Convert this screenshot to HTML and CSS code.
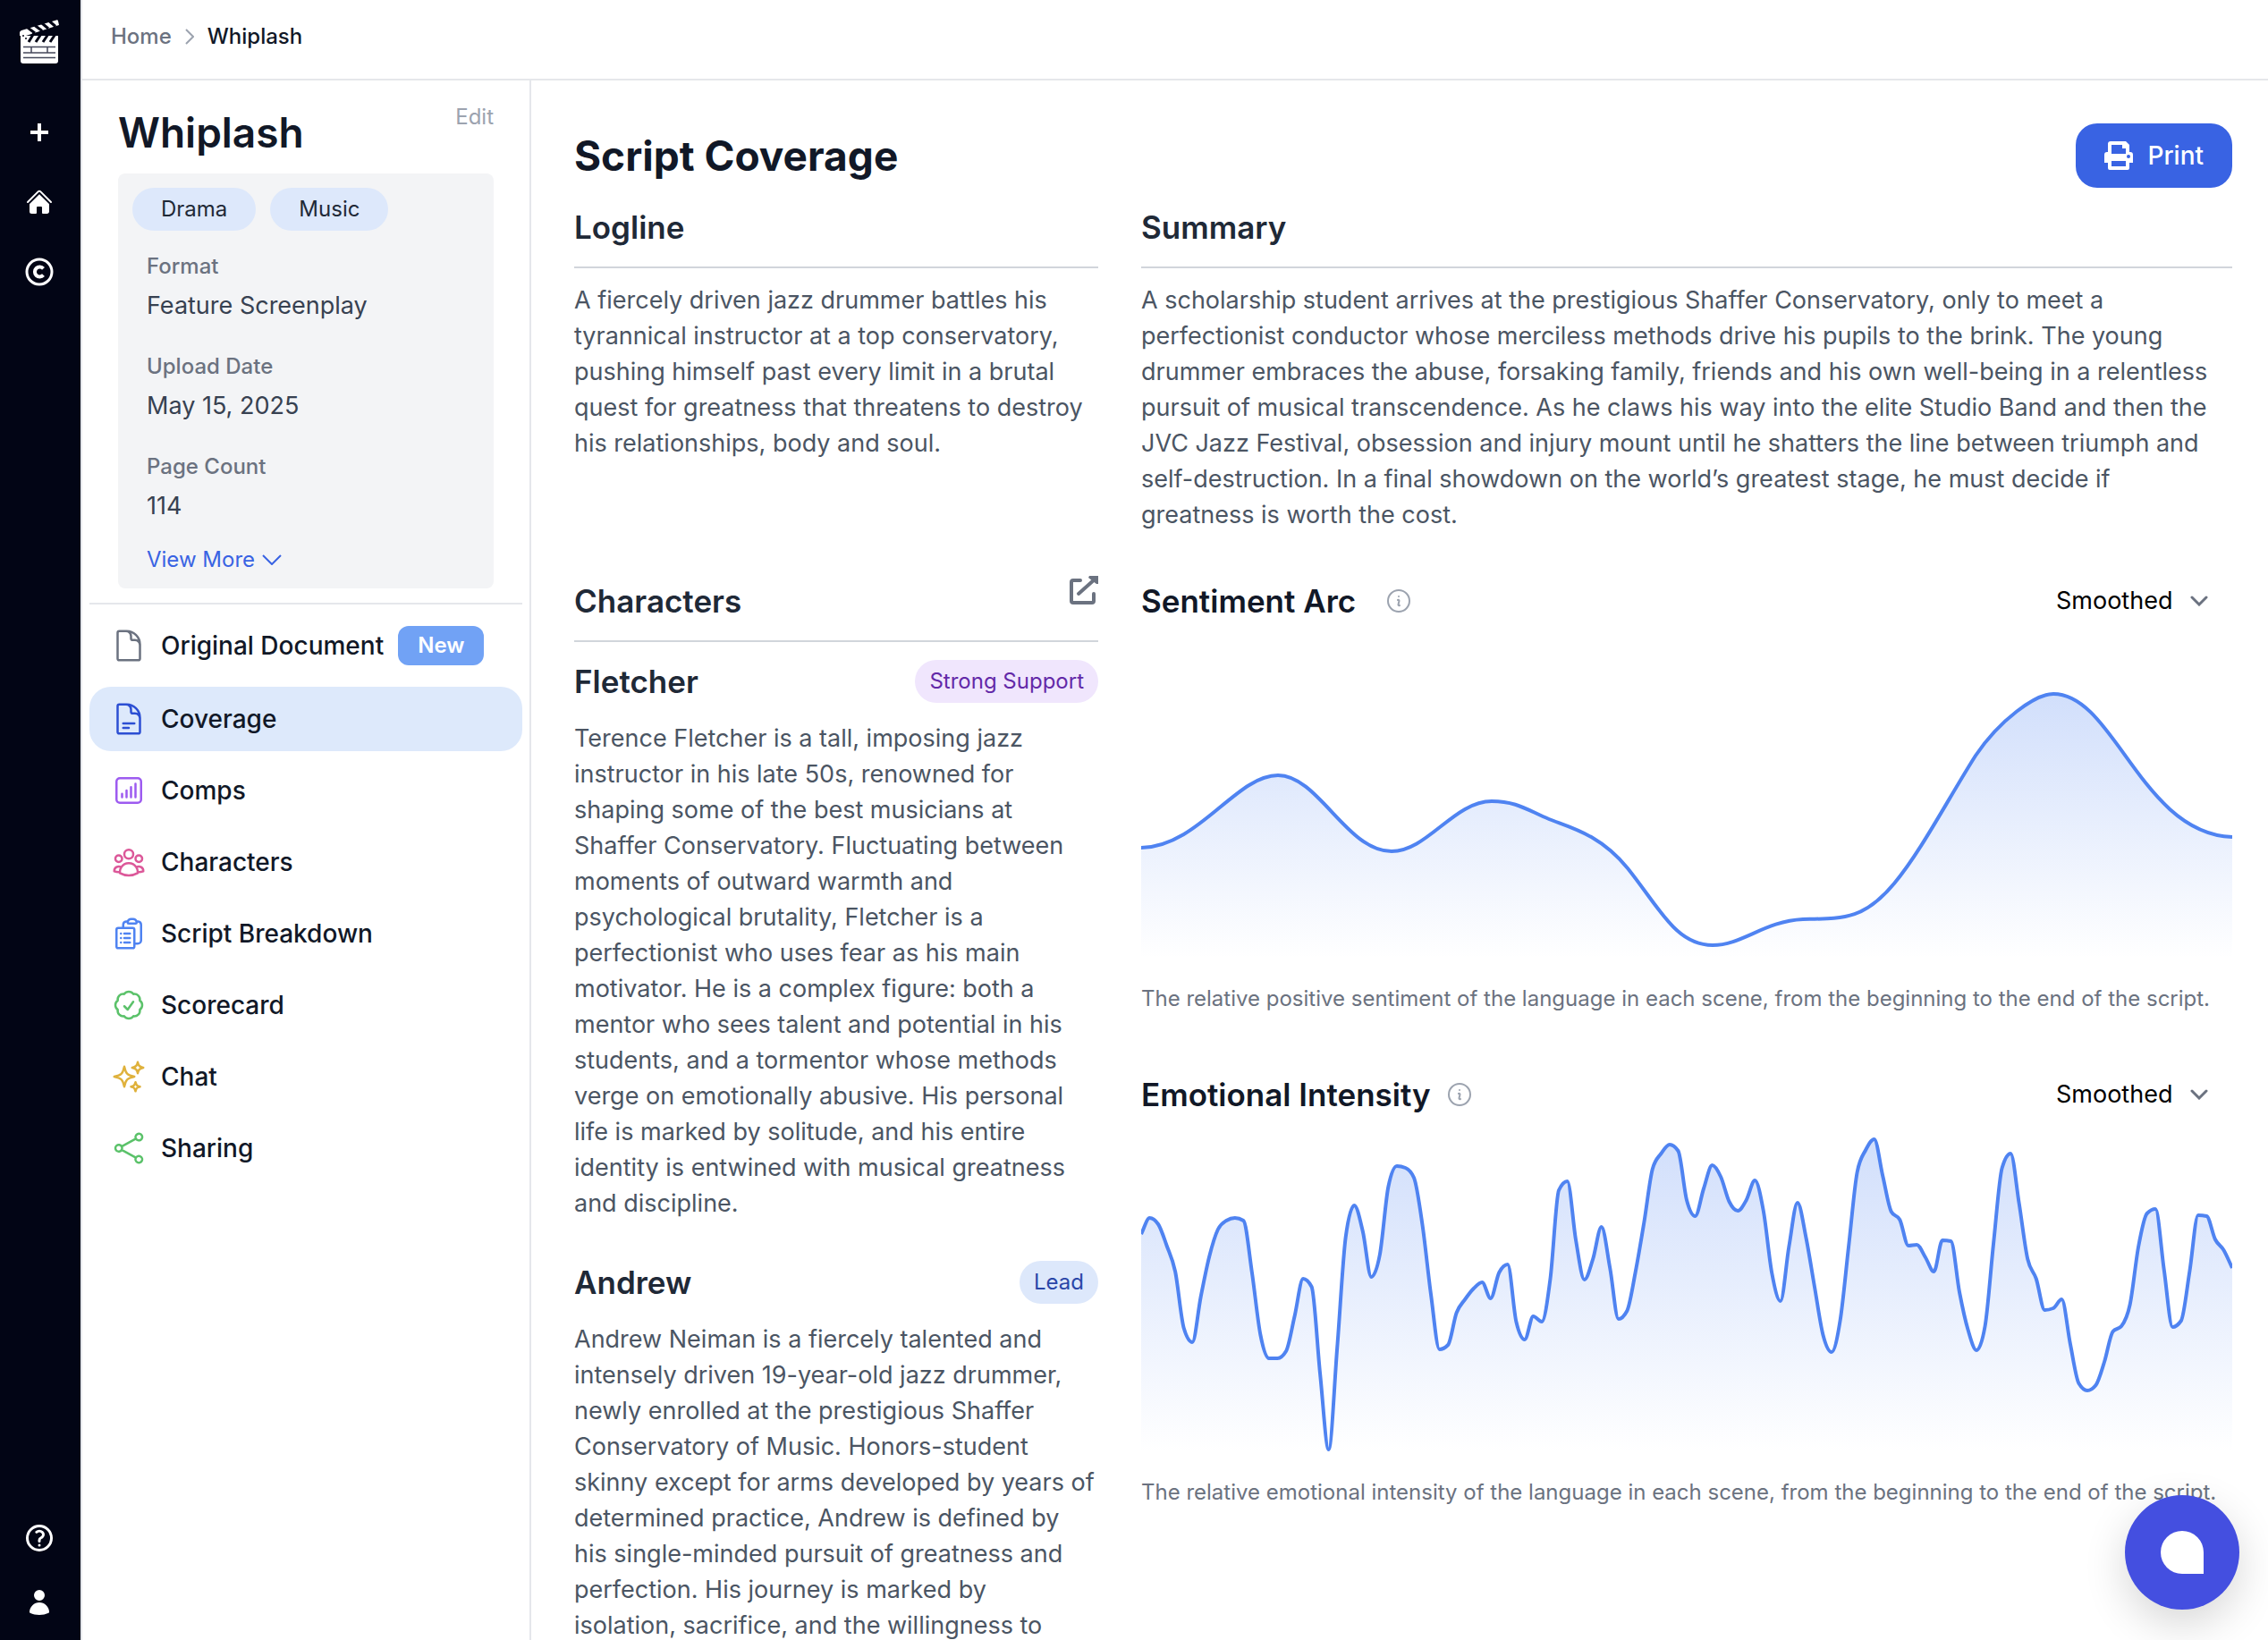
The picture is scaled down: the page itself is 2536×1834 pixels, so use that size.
FILE: index.html
```html
<!DOCTYPE html>
<html lang="en">

<head>
    <meta charset="UTF-8">
    <meta name="viewport" content="width=device-width, initial-scale=1.0">
    <title>Whiplash</title>
    <link rel="stylesheet" href="styles.css">
</head>

<body>
    <nav class="rail">
        <a href="#" class="logo" aria-label="Home">
            <svg viewBox="0 0 44 50">
                <path fill="#fff" d="M1 18 L43 18 V46 a3 3 0 0 1-3 3 H4 a3 3 0 0 1-3-3 Z" />
                <path fill="#fff" d="M0 15 a3 3 0 0 1 2-3 L41 .5 a1.5 1.5 0 0 1 2 1 L44 6 L7 18 H0 Z" />
                <path stroke="#020515" stroke-width="3" d="M9 9 l8 6 M17 6.500 l8 6 M25 4 l7 6 M33 1.500 l7 6" />
                <path stroke="#020515" stroke-width="3" d="M16 15 l-6 10 M24 16 l-6 9 M32 16 l-6 9 M40 16 l-6 9" />
                <path stroke="#020515" stroke-width="2" d="M14 17 L44 8" />
                <circle cx="4" cy="18" r="1" fill="#020515" />
                <circle cx="7" cy="21" r="1" fill="#020515" />
                <path stroke="#44475a" stroke-width="1.500" d="M4 30.500 h36 M4 37 h36 M4 42.500 h36 M13 30.500 v6.500 M31 30.500 v6.500" />
            </svg>
        </a>
        <div class="rail-links">
            <a href="#" aria-label="New">
                <svg viewBox="0 0 24 24" class="line bold">
                    <path d="M12 4.500v15m7.500-7.500h-15" />
                </svg>
            </a>
            <a href="#" aria-label="Home">
                <svg viewBox="0 0 24 24" fill="currentColor">
                    <path d="M11.470 3.841a.75.75 0 0 1 1.060 0l8.690 8.690a.75.75 0 1 0 1.060-1.061l-8.689-8.690a2.250 2.250 0 0 0-3.182 0l-8.690 8.690a.75.75 0 1 0 1.061 1.060l8.690-8.689Z" />
                    <path d="m12 5.432 8.159 8.159c.03.03.06.058.091.086v6.198c0 1.035-.84 1.875-1.875 1.875H15a.75.75 0 0 1-.75-.75v-4.500a.75.75 0 0 0-.75-.75h-3a.75.75 0 0 0-.75.75V21a.75.75 0 0 1-.75.75H5.625a1.875 1.875 0 0 1-1.875-1.875v-6.198a2.290 2.290 0 0 0 .091-.086L12 5.432Z" />
                </svg>
            </a>
            <a href="#" aria-label="Copyright">
                <svg viewBox="0 0 32 32" fill="none" stroke="currentColor">
                    <circle cx="16" cy="16" r="14" stroke-width="3" />
                    <path stroke-width="4" d="M20.500 12.300a5.500 5.500 0 1 0 0 7.400" />
                </svg>
            </a>
        </div>
        <div class="rail-bottom">
            <a href="#" aria-label="Help">
                <svg viewBox="0 0 24 24" class="line help">
                    <path d="M9.879 7.519c1.171-1.025 3.071-1.025 4.242 0 1.172 1.025 1.172 2.687 0 3.712-.203.179-.43.326-.67.442-.745.361-1.450.999-1.450 1.827v.75M21 12a9 9 0 1 1-18 0 9 9 0 0 1 18 0Zm-9 5.250h.008v.008H12v-.008Z" />
                </svg>
            </a>
            <a href="#" aria-label="Account">
                <svg viewBox="0 0 24 24" fill="currentColor">
                    <path d="M7.500 6a4.500 4.500 0 1 1 9 0 4.500 4.500 0 0 1-9 0ZM3.751 20.105a8.250 8.250 0 0 1 16.498 0 .75.75 0 0 1-.437.695A18.683 18.683 0 0 1 12 22.500c-2.786 0-5.433-.608-7.812-1.700a.75.75 0 0 1-.437-.695Z" />
                </svg>
            </a>
        </div>
    </nav>

    <div class="page">
        <header class="topbar">
            <a href="#">Home</a>
            <svg viewBox="0 0 10 18" class="crumb-arrow">
                <path d="M1 1l8 8-8 8" />
            </svg>
            <span>Whiplash</span>
        </header>

        <div class="columns">
            <aside class="panel">
                <div class="project">
                    <div class="project-head">
                        <h1>Whiplash</h1>
                        <a href="#">Edit</a>
                    </div>
                    <div class="card">
                        <div class="tags">
                            <span class="tag">Drama</span>
                            <span class="tag">Music</span>
                        </div>
                        <dl class="details">
                            <div>
                                <dt>Format</dt>
                                <dd>Feature Screenplay</dd>
                            </div>
                            <div>
                                <dt>Upload Date</dt>
                                <dd>May 15, 2025</dd>
                            </div>
                            <div>
                                <dt>Page Count</dt>
                                <dd>114</dd>
                            </div>
                        </dl>
                        <button type="button" class="view-more">
                            View More
                            <svg viewBox="0 0 22 12">
                                <path d="M1 1l10 10L21 1" />
                            </svg>
                        </button>
                    </div>
                </div>

                <nav class="menu">
                    <a href="#" class="menu-item">
                        <svg viewBox="0 0 24 24" class="line gray">
                            <path d="M19.500 14.250v-2.625a3.375 3.375 0 0 0-3.375-3.375h-1.500A1.125 1.125 0 0 1 13.500 7.125v-1.500a3.375 3.375 0 0 0-3.375-3.375H8.250m2.250 0H5.625c-.621 0-1.125.504-1.125 1.125v17.250c0 .621.504 1.125 1.125 1.125h12.750c.621 0 1.125-.504 1.125-1.125V11.250a9 9 0 0 0-9-9Z" />
                        </svg>
                        Original Document
                        <span class="new">New</span>
                    </a>
                    <a href="#" class="menu-item active">
                        <svg viewBox="0 0 24 24" class="line navy">
                            <path d="M19.500 14.250v-2.625a3.375 3.375 0 0 0-3.375-3.375h-1.500A1.125 1.125 0 0 1 13.500 7.125v-1.500a3.375 3.375 0 0 0-3.375-3.375H8.250m0 12.750h7.500m-7.500 3H12M10.500 2.250H5.625c-.621 0-1.125.504-1.125 1.125v17.250c0 .621.504 1.125 1.125 1.125h12.750c.621 0 1.125-.504 1.125-1.125V11.250a9 9 0 0 0-9-9Z" />
                        </svg>
                        Coverage
                    </a>
                    <a href="#" class="menu-item">
                        <svg viewBox="0 0 24 24" class="line purple">
                            <path d="M7.500 14.250v2.250m3-4.500v4.500m3-6.750v6.750m3-9v9M6 20.250h12A2.250 2.250 0 0 0 20.250 18V6A2.250 2.250 0 0 0 18 3.750H6A2.250 2.250 0 0 0 3.750 6v12A2.250 2.250 0 0 0 6 20.250Z" />
                        </svg>
                        Comps
                    </a>
                    <a href="#" class="menu-item">
                        <svg viewBox="0 0 24 24" class="line pink">
                            <path d="M18 18.720a9.094 9.094 0 0 0 3.741-.479 3 3 0 0 0-4.682-2.720m.94 3.198.001.031c0 .225-.012.447-.037.666A11.944 11.944 0 0 1 12 21c-2.170 0-4.207-.576-5.963-1.584A6.062 6.062 0 0 1 6 18.719m12 0a5.971 5.971 0 0 0-.941-3.197m0 0A5.995 5.995 0 0 0 12 12.750a5.995 5.995 0 0 0-5.058 2.772m0 0a3 3 0 0 0-4.681 2.720 8.986 8.986 0 0 0 3.740.477m.94-3.197a5.971 5.971 0 0 0-.94 3.197M15 6.750a3 3 0 1 1-6 0 3 3 0 0 1 6 0Zm6 3a2.250 2.250 0 1 1-4.500 0 2.250 2.250 0 0 1 4.500 0Zm-13.500 0a2.250 2.250 0 1 1-4.500 0 2.250 2.250 0 0 1 4.500 0Z" />
                        </svg>
                        Characters
                    </a>
                    <a href="#" class="menu-item">
                        <svg viewBox="0 0 24 24" class="line blue">
                            <path d="M9 12h3.750M9 15h3.750M9 18h3.750m3 .75H18a2.250 2.250 0 0 0 2.250-2.250V6.108c0-1.135-.845-2.098-1.976-2.192a48.424 48.424 0 0 0-1.123-.08m-5.801 0c-.065.21-.1.433-.1.664 0 .414.336.75.75.75h4.500a.75.75 0 0 0 .75-.75 2.250 2.250 0 0 0-.1-.664m-5.800 0A2.251 2.251 0 0 1 13.500 2.250H15c1.012 0 1.867.668 2.150 1.586m-5.800 0c-.376.023-.75.05-1.124.08C9.095 4.010 8.250 4.973 8.250 6.108V8.250m0 0H4.875c-.621 0-1.125.504-1.125 1.125v11.250c0 .621.504 1.125 1.125 1.125h9.750c.621 0 1.125-.504 1.125-1.125V9.375c0-.621-.504-1.125-1.125-1.125H8.250ZM6.750 12h.008v.008H6.750V12Zm0 3h.008v.008H6.750V15Zm0 3h.008v.008H6.750V18Z" />
                        </svg>
                        Script Breakdown
                    </a>
                    <a href="#" class="menu-item">
                        <svg viewBox="0 0 24 24" class="line green">
                            <path d="M9 12.750 11.250 15 15 9.750M21 12c0 1.268-.63 2.390-1.593 3.068a3.745 3.745 0 0 1-1.043 3.296 3.745 3.745 0 0 1-3.296 1.043A3.745 3.745 0 0 1 12 21c-1.268 0-2.390-.63-3.068-1.593a3.746 3.746 0 0 1-3.296-1.043 3.745 3.745 0 0 1-1.043-3.296A3.745 3.745 0 0 1 3 12c0-1.268.63-2.390 1.593-3.068a3.745 3.745 0 0 1 1.043-3.296 3.746 3.746 0 0 1 3.296-1.043A3.746 3.746 0 0 1 12 3c1.268 0 2.390.63 3.068 1.593a3.746 3.746 0 0 1 3.296 1.043 3.746 3.746 0 0 1 1.043 3.296A3.745 3.745 0 0 1 21 12Z" />
                        </svg>
                        Scorecard
                    </a>
                    <a href="#" class="menu-item">
                        <svg viewBox="0 0 24 24" class="line yellow">
                            <path d="M9.813 15.904 9 18.750l-.813-2.846a4.500 4.500 0 0 0-3.090-3.090L2.250 12l2.846-.813a4.500 4.500 0 0 0 3.090-3.090L9 5.250l.813 2.846a4.500 4.500 0 0 0 3.090 3.090L15.750 12l-2.846.813a4.500 4.500 0 0 0-3.090 3.090ZM18.259 8.715 18 9.750l-.259-1.035a3.375 3.375 0 0 0-2.455-2.456L14.250 6l1.036-.259a3.375 3.375 0 0 0 2.455-2.456L18 2.250l.259 1.035a3.375 3.375 0 0 0 2.456 2.456L21.750 6l-1.035.259a3.375 3.375 0 0 0-2.456 2.456ZM16.894 20.567 16.500 21.750l-.394-1.183a2.250 2.250 0 0 0-1.423-1.423L13.500 18.750l1.183-.394a2.250 2.250 0 0 0 1.423-1.423l.394-1.183.394 1.183a2.250 2.250 0 0 0 1.423 1.423l1.183.394-1.183.394a2.250 2.250 0 0 0-1.423 1.423Z" />
                        </svg>
                        Chat
                    </a>
                    <a href="#" class="menu-item">
                        <svg viewBox="0 0 24 24" class="line green">
                            <path d="M7.217 10.907a2.250 2.250 0 1 0 0 2.186m0-2.186c.18.324.283.696.283 1.093s-.103.77-.283 1.093m0-2.186 9.566-5.314m-9.566 7.500 9.566 5.314m0 0a2.250 2.250 0 1 0 3.935 2.186 2.250 2.250 0 0 0-3.935-2.186Zm0-12.814a2.250 2.250 0 1 0 3.933-2.185 2.250 2.250 0 0 0-3.933 2.185Z" />
                        </svg>
                        Sharing
                    </a>
                </nav>
            </aside>

            <main class="content">
                <div class="content-head">
                    <h2>Script Coverage</h2>
                    <button type="button" class="print">
                        <svg viewBox="0 0 32 32">
                            <path fill="#fff" fill-rule="evenodd" d="M7 0h17l4 4v8h1a3 3 0 0 1 3 3v9h-4v6a2 2 0 0 1-2 2H6a2 2 0 0 1-2-2v-6H0v-9a3 3 0 0 1 3-3h1V3a3 3 0 0 1 3-3ZM8 4v10h16V8h-4V4ZM8 22v6h16v-6Z" />
                            <circle cx="27" cy="17" r="2" fill="#3963e3" />
                        </svg>
                        Print
                    </button>
                </div>

                <div class="grid">
                    <section class="narrow">
                        <div class="section-head">
                            <h3>Logline</h3>
                        </div>
                        <p>A fiercely driven jazz drummer battles his tyrannical instructor at a top conservatory, pushing himself past every limit in a brutal quest for greatness that threatens to destroy his relationships, body and soul.</p>
                    </section>

                    <section class="wide">
                        <div class="section-head">
                            <h3>Summary</h3>
                        </div>
                        <p>A scholarship student arrives at the prestigious Shaffer Conservatory, only to meet a perfectionist conductor whose merciless methods drive his pupils to the brink. The young drummer embraces the abuse, forsaking family, friends and his own well-being in a relentless pursuit of musical transcendence. As he claws his way into the elite Studio Band and then the JVC Jazz Festival, obsession and injury mount until he shatters the line between triumph and self-destruction. In a final showdown on the world’s greatest stage, he must decide if<br>greatness is worth the cost.</p>
                    </section>

                    <section class="narrow">
                        <div class="section-head">
                            <h3>Characters</h3>
                            <a href="#" aria-label="Open characters">
                                <svg viewBox="0 0 32 32" class="open">
                                    <path d="M12 5H4a2 2 0 0 0-2 2v21a2 2 0 0 0 2 2h21a2 2 0 0 0 2-2v-8M10 20L29 3" />
                                    <path class="head" d="M22 0h10v9h-2l-9-7Z" />
                                </svg>
                            </a>
                        </div>
                        <article class="character">
                            <div class="character-head">
                                <h4>Fletcher</h4>
                                <span class="role support">Strong Support</span>
                            </div>
                            <p>Terence Fletcher is a tall, imposing jazz instructor in his late 50s, renowned for shaping some of the best musicians at Shaffer Conservatory. Fluctuating between moments of outward warmth and psychological brutality, Fletcher is a perfectionist who uses fear as his main motivator. He is a complex figure: both a mentor who sees talent and potential in his students, and a tormentor whose methods verge on emotionally abusive. His personal life is marked by solitude, and his entire identity is entwined with musical greatness and discipline.</p>
                        </article>
                        <article class="character">
                            <div class="character-head">
                                <h4>Andrew</h4>
                                <span class="role lead">Lead</span>
                            </div>
                            <p>Andrew Neiman is a fiercely talented and intensely driven 19-year-old jazz drummer, newly enrolled at the prestigious Shaffer Conservatory of Music. Honors-student skinny except for arms developed by years of determined practice, Andrew is defined by his single-minded pursuit of greatness and perfection. His journey is marked by<br>isolation, sacrifice, and the willingness to</p>
                        </article>
                    </section>

                    <section class="wide">
                        <div class="chart-block">
                            <div class="chart-head">
                                <h3 class="spaced">Sentiment Arc</h3>
                                <svg viewBox="0 0 24 24" class="line info">
                                    <path d="m11.250 11.250.041-.02a.75.75 0 0 1 1.063.852l-.708 2.836a.75.75 0 0 0 1.063.853l.041-.021M21 12a9 9 0 1 1-18 0 9 9 0 0 1 18 0Zm-9-3.750h.008v.008H12V8.250Z" />
                                </svg>
                                <div class="picker">
                                    <select aria-label="Sentiment arc view">
                                        <option>Smoothed</option>
                                        <option>Raw</option>
                                    </select>
                                    <svg viewBox="0 0 20 12">
                                        <path d="M2 2l8 8 8-8" />
                                    </svg>
                                </div>
                            </div>
                            <svg class="chart" id="sentiment" viewBox="0 0 1220 360" preserveAspectRatio="none">
                                <defs>
                                    <linearGradient id="fade" x1="0" y1="0" x2="0" y2="1">
                                        <stop offset="0" stop-color="#4f83f1" stop-opacity=".26" />
                                        <stop offset="1" stop-color="#4f83f1" stop-opacity="0" />
                                    </linearGradient>
                                </defs>
                            </svg>
                            <p class="caption">The relative positive sentiment of the language in each scene, from the beginning to the end of the script.</p>
                        </div>

                        <div class="chart-block">
                            <div class="chart-head">
                                <h3>Emotional Intensity</h3>
                                <svg viewBox="0 0 24 24" class="line info">
                                    <path d="m11.250 11.250.041-.02a.75.75 0 0 1 1.063.852l-.708 2.836a.75.75 0 0 0 1.063.853l.041-.021M21 12a9 9 0 1 1-18 0 9 9 0 0 1 18 0Zm-9-3.750h.008v.008H12V8.250Z" />
                                </svg>
                                <div class="picker">
                                    <select aria-label="Emotional intensity view">
                                        <option>Smoothed</option>
                                        <option>Raw</option>
                                    </select>
                                    <svg viewBox="0 0 20 12">
                                        <path d="M2 2l8 8 8-8" />
                                    </svg>
                                </div>
                            </div>
                            <svg class="chart" id="intensity" viewBox="0 0 1220 360" preserveAspectRatio="none"></svg>
                            <p class="caption">The relative emotional intensity of the language in each scene, from the beginning to the end of the script.</p>
                        </div>
                    </section>
                </div>
            </main>
        </div>
    </div>

    <button type="button" class="chat" aria-label="Open chat"><span></span></button>

    <script src="charts.js"></script>
</body>

</html>
```
FILE: styles.css
```css
* {
    box-sizing: border-box;
}

body {
    margin: 0;
    height: 100vh;
    display: flex;
    overflow: hidden;
    background-color: #fff;
    color: #111827;
    font-family: Inter, "Liberation Sans", sans-serif;
    font-size: 27px;
    line-height: 40px;
}

h1, h2, h3, h4, p, dl, dd {
    margin: 0;
}

a {
    color: inherit;
    text-decoration: none;
}

svg {
    display: block;
    flex-shrink: 0;
}

button {
    border: none;
    font-family: inherit;
    cursor: pointer;
}

/* outline icons */
.line {
    fill: none;
    stroke: currentColor;
    stroke-width: 1.5;
    stroke-linecap: round;
    stroke-linejoin: round;
}

/* left rail */
.rail {
    width: 92px;
    flex-shrink: 0;
    display: flex;
    flex-direction: column;
    align-items: center;
    padding: 22px 2px 26px 0;
    border-right: 2px solid #e5e7eb;
    background-color: #020515;
    color: #fff;
}

.logo svg {
    width: 44px;
    height: 50px;
}

.rail-links {
    display: flex;
    flex-direction: column;
    gap: 46px;
    margin-top: 60px;
}

.rail-links svg {
    width: 32px;
    height: 32px;
}

.rail-links .bold {
    stroke-width: 3;
    stroke-linecap: butt;
}

.rail-bottom {
    display: flex;
    flex-direction: column;
    align-items: center;
    gap: 38px;
    margin-top: auto;
}

.rail-bottom svg {
    width: 32px;
    height: 32px;
}

.rail-bottom .help {
    width: 36px;
    height: 36px;
    stroke-width: 2;
}

.page {
    flex: 1;
    min-width: 0;
    display: flex;
    flex-direction: column;
}

/* breadcrumb */
.topbar {
    display: flex;
    align-items: center;
    gap: 15px;
    height: 90px;
    padding: 0 32px 6px;
    border-bottom: 2px solid #e5e7eb;
    font-size: 24px;
    font-weight: 500;
}

.topbar a {
    color: #6b7280;
}

.crumb-arrow {
    width: 10px;
    height: 18px;
    fill: none;
    stroke: #9ca3af;
    stroke-width: 2;
}

.columns {
    flex: 1;
    min-height: 0;
    display: flex;
}

/* project panel */
.panel {
    width: 502px;
    flex-shrink: 0;
    padding: 0 8px;
    border-right: 2px solid #e5e7eb;
}

.project {
    padding: 24px 32px 16px;
    border-bottom: 2px solid #e5e7eb;
}

.project-head {
    display: flex;
    justify-content: space-between;
    align-items: flex-start;
    padding-bottom: 12px;
}

.project-head h1 {
    font-size: 46px;
    font-weight: 600;
    line-height: 68px;
}

.project-head a {
    color: #9ca3af;
    font-size: 24px;
    line-height: 34px;
}

.card {
    padding: 16px;
    border-radius: 8px;
    background-color: #f3f4f6;
}

.tags {
    display: flex;
    gap: 16px;
}

.tag {
    padding: 0 32px;
    border-radius: 24px;
    background-color: #dde8fb;
    color: #1f2937;
    font-size: 24px;
    line-height: 48px;
}

.details {
    display: flex;
    flex-direction: column;
    gap: 32px;
    padding: 24px 16px;
}

.details dt {
    margin-bottom: 8px;
    color: #6b7280;
    font-size: 24px;
    font-weight: 500;
    line-height: 32px;
}

.details dd {
    color: #374151;
}

.view-more {
    display: flex;
    align-items: center;
    gap: 8px;
    padding: 0 16px;
    background: none;
    color: #3963e3;
    font-size: 24px;
    line-height: 32px;
}

.view-more svg {
    width: 22px;
    height: 12px;
    fill: none;
    stroke: currentColor;
    stroke-width: 2;
}

/* menu */
.menu {
    display: flex;
    flex-direction: column;
    gap: 8px;
    padding-top: 8px;
}

.menu-item {
    display: flex;
    align-items: center;
    gap: 16px;
    padding: 16px 24px;
    border-radius: 24px;
    font-size: 28px;
    font-weight: 500;
}

.menu-item.active {
    background-color: #dde9fb;
}

.menu-item svg {
    width: 40px;
    height: 40px;
}

.new {
    padding: 0 22px;
    border-radius: 12px;
    background-color: #71a2f5;
    color: #fff;
    font-size: 24px;
    font-weight: 600;
    line-height: 44px;
}

.gray { color: #6b7280; }
.navy { color: #2c4fd3; }
.purple { color: #9d5bf0; }
.pink { color: #dc5899; }
.blue { color: #4f83f1; }
.green { color: #5bc26a; }
.yellow { color: #dfb13b; }

/* coverage */
.content {
    flex: 1;
    min-width: 0;
    padding: 48px 40px 48px 48px;
    overflow-y: auto;
    scrollbar-width: none;
}

.content-head {
    display: flex;
    justify-content: space-between;
    align-items: center;
    margin-bottom: 16px;
}

.content-head h2 {
    font-size: 46px;
    font-weight: 700;
    line-height: 72px;
}

.print {
    display: flex;
    align-items: center;
    gap: 16px;
    padding: 16px 32px;
    border-radius: 24px;
    background-color: #3963e3;
    color: #fff;
    font-size: 28px;
    font-weight: 500;
    line-height: 40px;
}

.print svg {
    width: 32px;
    height: 32px;
}

.grid {
    display: grid;
    grid-template-columns: repeat(12, minmax(0, 1fr));
    gap: 48px;
}

.narrow {
    grid-column: span 4;
}

.wide {
    grid-column: span 8;
}

.section-head {
    display: flex;
    justify-content: space-between;
    align-items: flex-start;
    margin-bottom: 16px;
    padding-bottom: 16px;
    border-bottom: 2px solid #d1d5db;
}

h3, h4 {
    color: #1f2937;
    font-size: 35px;
    font-weight: 600;
    line-height: 56px;
}

.content p {
    color: #4b5563;
}

.open {
    width: 32px;
    height: 32px;
    fill: none;
    stroke: #6b7280;
    stroke-width: 4;
    stroke-linecap: round;
}

.open .head {
    fill: #6b7280;
    stroke: none;
}

.character {
    margin-bottom: 40px;
}

.character-head {
    display: flex;
    justify-content: space-between;
    align-items: center;
    margin-bottom: 16px;
}

.role {
    padding: 0 16px;
    border-radius: 24px;
    font-size: 24px;
    line-height: 48px;
}

.support {
    background-color: #f0e6fd;
    color: #6329a8;
}

.lead {
    background-color: #dde8fb;
    color: #2a46a8;
}

/* charts */
.chart-block {
    margin-bottom: 62px;
}

.chart-head {
    display: flex;
    align-items: center;
    gap: 16px;
}

.chart-head h3 {
    color: #111827;
}

.chart-head .spaced {
    margin-right: 16px;
}

.info {
    width: 32px;
    height: 32px;
    color: #9ca3af;
}

.picker {
    position: relative;
    margin-left: auto;
}

.picker select {
    appearance: none;
    padding: 0 66px 0 0;
    border: none;
    background: none;
    color: #000;
    font-family: inherit;
    font-size: 27px;
    line-height: 40px;
}

.picker svg {
    position: absolute;
    right: 27px;
    top: 14px;
    width: 20px;
    height: 12px;
    fill: none;
    stroke: #6b7280;
    stroke-width: 3;
    stroke-linecap: round;
    pointer-events: none;
}

.chart {
    width: 100%;
    height: 360px;
    margin: 16px 0 24px;
}

.chart .area {
    fill: url(#fade);
}

.chart .stroke {
    fill: none;
    stroke: #4f83f1;
    stroke-width: 4;
    stroke-linejoin: round;
    vector-effect: non-scaling-stroke;
}

.content .caption {
    color: #6b7280;
    font-size: 24px;
    line-height: 34px;
}

/* chat bubble */
.chat {
    position: fixed;
    right: 32px;
    bottom: 34px;
    width: 128px;
    height: 128px;
    display: flex;
    justify-content: center;
    align-items: center;
    border-radius: 50%;
    background-color: #444fe0;
    box-shadow: 0 16px 48px rgba(0, 0, 0, .16);
}

.chat span {
    width: 48px;
    height: 48px;
    border-radius: 24px 24px 0 24px;
    background-color: #fff;
}
```
FILE: charts.js
```js
// smoothed arc, one segment per rise or fall
const sentiment = 'M0,232' +
    'C64,231 106,151 153,151' +
    'C198,151 230,236 280,236' +
    'C320,236 350,180 392,180' +
    'C420,180 432,190 456,200' +
    'C478,209 512,216 544,255' +
    'C580,300 598,341 639,341' +
    'C672,341 697,314 740,312' +
    'C785,311 808,313 842,272' +
    'C872,236 902,178 933,129' +
    'C960,89 1000,60 1020,60' +
    'C1088,60 1118,216 1220,220';

// one value per scene
const intensity = [
    112, 94, 101, 125, 154, 217, 233, 182, 137, 107, 97, 94, 97, 155, 225, 251, 251, 243, 204, 162,
    171, 269, 353, 239, 115, 80, 109, 160, 135, 59, 36, 38, 49, 102, 180, 241, 236, 200, 185, 173,
    166, 184, 155, 146, 210, 230, 204, 210, 162, 63, 53, 119, 163, 140, 104, 150, 207, 198, 154, 99,
    39, 22, 12, 19, 74, 92, 61, 35, 48, 76, 86, 74, 52, 86, 156, 187, 126, 77, 116, 171,
    225, 244, 209, 126, 43, 18, 6, 47, 87, 96, 125, 124, 138, 154, 119, 120, 177, 219, 242, 215,
    122, 38, 22, 78, 140, 162, 197, 195, 185, 235, 279, 287, 281, 255, 221, 215, 191, 126, 89, 84,
    152, 216, 209, 154, 91, 92, 118, 130, 150
].map((y, i, all) => [i * 1220 / (all.length - 1), y]);

// monotone cubic through the points
function curve(points) {
    const n = points.length;
    const slopes = [];
    for (let i = 0; i < n - 1; i++) {
        slopes.push((points[i + 1][1] - points[i][1]) / (points[i + 1][0] - points[i][0]));
    }
    const tangents = points.map((p, i) => {
        if (i === 0) return slopes[0];
        if (i === n - 1) return slopes[n - 2];
        const a = slopes[i - 1];
        const b = slopes[i];
        if (a * b <= 0) return 0;
        return Math.sign(a) * Math.min(2 * Math.abs(a), 2 * Math.abs(b), Math.abs(a + b) / 2);
    });

    let d = 'M' + points[0].join(',');
    for (let i = 0; i < n - 1; i++) {
        const [x0, y0] = points[i];
        const [x1, y1] = points[i + 1];
        const h = (x1 - x0) / 3;
        d += `C${x0 + h},${y0 + tangents[i] * h} ${x1 - h},${y1 - tangents[i + 1] * h} ${x1},${y1}`;
    }
    return d;
}

function draw(id, line) {
    const chart = document.getElementById(id);
    [['area', line + 'V356H0Z'], ['stroke', line]].forEach(([name, d]) => {
        const path = document.createElementNS('http://www.w3.org/2000/svg', 'path');
        path.setAttribute('class', name);
        path.setAttribute('d', d);
        chart.appendChild(path);
    });
}

draw('sentiment', sentiment);
draw('intensity', curve(intensity));
```
